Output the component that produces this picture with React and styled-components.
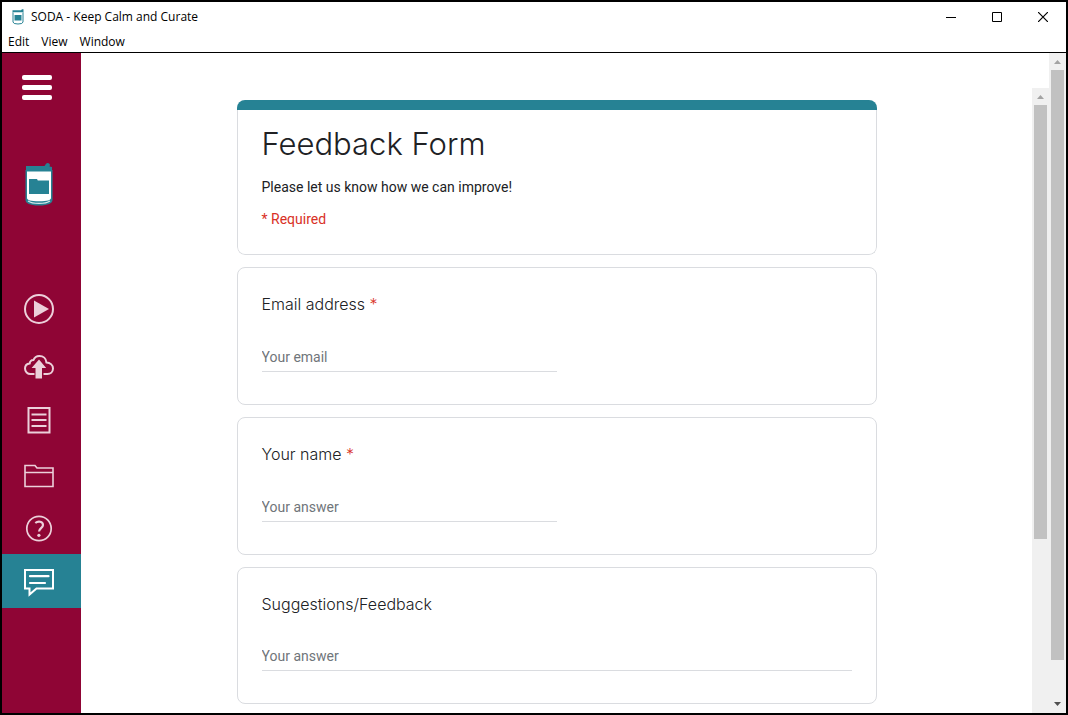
import React from "react";
import styled, { createGlobalStyle } from "styled-components";

const TEAL = "#268294";
const MAROON = "#8f0535";

const GlobalStyle = createGlobalStyle`
  *, *::before, *::after { box-sizing: border-box; }
  body {
    margin: 0;
    background: #fff;
    font-family: Roboto, "Liberation Sans", sans-serif;
    font-size: 14px;
    line-height: 20px;
    color: #202124;
  }
`;

const AppWindow = styled.div`
  display: flex;
  flex-direction: column;
  height: 100vh;
  border: 2px solid #000;
  background: #fff;
  overflow: hidden;
`;

const Header = styled.header`
  flex: none;
  border-bottom: 1px solid #000;
  font-family: "Open Sans", "Noto Sans", sans-serif;
  font-size: 12px;
  color: #000;
`;

const TitleBar = styled.div`
  display: flex;
  align-items: center;
  height: 30px;
  padding-left: 9px;
`;

const WindowTitle = styled.span`
  flex: 1;
  margin-left: 6px;
  font-size: 12px;
`;

const WindowButton = styled.button`
  display: flex;
  align-items: center;
  justify-content: center;
  width: 46px;
  height: 30px;
  padding: 0;
  border: 0;
  background: none;
  color: #000;
`;

const MenuBar = styled.nav`
  display: flex;
  gap: 12px;
  height: 20px;
  padding-left: 6px;
`;

const MenuButton = styled.button`
  padding: 0;
  border: 0;
  background: none;
  font: inherit;
  color: inherit;
`;

const Body = styled.div`
  display: flex;
  flex: 1;
  min-height: 0;
`;

const Sidebar = styled.aside`
  display: flex;
  flex-direction: column;
  flex: none;
  width: 79px;
  padding-top: 22px;
  background: ${MAROON};
`;

const Burger = styled.button`
  display: flex;
  flex-direction: column;
  gap: 5px;
  width: 30px;
  margin-left: 20px;
  padding: 0;
  border: 0;
  background: none;
`;

const BurgerBar = styled.span`
  width: 100%;
  height: 5px;
  border-radius: 2px;
  background: #fff;
`;

const Brand = styled.div`
  display: flex;
  justify-content: center;
  margin: 63px 0 78px;
  padding-right: 5px;
`;

const NavItem = styled.button`
  display: flex;
  align-items: center;
  justify-content: center;
  width: 100%;
  height: 54px;
  padding: 0 5px 0 0;
  border: 0;
  background: ${(p) => (p.$active ? TEAL : "transparent")};
  color: ${(p) => (p.$active ? "#fff" : "#ecd0da")};
`;

const Content = styled.main`
  display: flex;
  flex: 1;
  min-width: 0;
  padding-top: 35px;
`;

const FormPane = styled.div`
  flex: 1;
  min-width: 0;
  overflow: hidden;
`;

const Form = styled.form`
  display: flex;
  flex-direction: column;
  gap: 12px;
  max-width: 640px;
  margin: 0 auto;
  padding: 12px 0;
`;

const Card = styled.section`
  padding: 24px;
  border: 1px solid #dadce0;
  border-radius: 8px;
  background: #fff;
`;

const Intro = styled.div`
  border-radius: 8px;
  overflow: hidden;
`;

const AccentBar = styled.div`
  height: 10px;
  background: ${TEAL};
`;

const IntroCard = styled(Card)`
  padding: 12px 24px 25px;
  border-top: 0;
  border-radius: 0 0 8px 8px;
`;

const FormTitle = styled.h1`
  margin: 0;
  font-family: "Google Sans", Inter, sans-serif;
  font-size: 31px;
  font-weight: 300;
  line-height: 43px;
`;

const Note = styled.p`
  margin: 12px 0 0;
  color: ${(p) => (p.$required ? "#d93025" : "#202124")};
`;

const Question = styled.label`
  display: block;
  margin-bottom: 28px;
  font-family: "Google Sans", Inter, sans-serif;
  font-size: 16px;
  font-weight: 300;
  line-height: 24px;
`;

const Star = styled.span`
  color: #d93025;
`;

const Answer = styled.input`
  display: block;
  width: ${(p) => (p.$wide ? "100%" : "50%")};
  height: ${(p) => (p.$wide ? "27px" : "28px")};
  margin-bottom: 8px;
  padding: ${(p) => (p.$wide ? "0 0 2px" : "1px 0 2px")};
  border: 0;
  border-bottom: 1px solid #dadce0;
  outline: 0;
  resize: none;
  overflow: hidden;
  background: none;
  font: inherit;
  line-height: 24px;
  &::placeholder { color: #70757a; opacity: 1; }
`;

const Track = styled.div`
  display: flex;
  flex-direction: column;
  flex: none;
  width: 17px;
  background: #f0f0f0;
`;

const TrackArrow = styled.svg`
  flex: none;
  width: 17px;
  height: 17px;
`;

const Thumb = styled.div`
  flex: ${(p) => p.$share};
  margin: 0 2px;
  background: #c1c1c1;
`;

const TrackRest = styled.div`
  flex: ${(p) => p.$share};
`;

function Jar({ width, height }) {
  return (
    <svg width={width} height={height} viewBox="0 0 28 43" aria-hidden="true">
      <path d="M1 3h18.500l1.500-2h3.500v2.500l2.500.5v4H1z" fill={TEAL} />
      <circle cx="22.700" cy="2" r="2" fill={TEAL} />
      <path d="M.5 7h27v30c0 3-4 5.500-13.500 5.500S.5 40 .5 37z" fill={TEAL} />
      <path d="M2 8.500h24V35c0 2-3.500 3.300-12 3.300S2 37 2 35z" fill="#fff" />
      <path d="M3 38c4.500 3.200 17.500 3.200 22 0" fill="none" stroke="#d5e8ec" strokeWidth="1.200" />
      <path d="M4 16h8l.8 1.500H24V31H4z" fill={TEAL} />
    </svg>
  );
}

function SmallJar() {
  return (
    <svg width="14" height="16" viewBox="0 0 14 16" aria-hidden="true">
      <path d="M1.500 1.200h8.500l1-1h1.500v3.300H1.500z" fill={TEAL} />
      <path d="M2 3.500v9.500q0 2 5 2t5-2V3.500" fill="#fff" stroke={TEAL} />
      <path d="M3.500 6h7v5.500h-7z" fill={TEAL} />
    </svg>
  );
}

const stroke = { fill: "none", stroke: "currentColor", strokeWidth: 2 };

const drawings = {
  Play: (
    <>
      <circle cx="18" cy="16" r="14" {...stroke} />
      <path d="M13 7.500v17L28 16z" fill="currentColor" />
    </>
  ),
  Upload: (
    <>
      <path d="M13.500 27H9.500C6.500 27 4 24.600 4 21.600c0-2.800 2-4.900 4.700-5.200 0-2 1.700-3.500 3.700-3.300 1-2.500 3.300-4.100 6-4.100 3.800 0 6.700 2.700 7 6.400C29 15.600 32 18 32 21.500c0 3.200-2.500 5.500-5.600 5.500H22.500" {...stroke} />
      <path d="M18 12.500l7.200 8.500H21v10.500h-6.500V21h-3.900z" fill="currentColor" />
    </>
  ),
  Document: (
    <path d="M7.500 7H28.500v24.500H7.500zM10.500 13.500h15M10.500 19h15M10.500 25h15" {...stroke} />
  ),
  Folder: (
    <path d="M4 31.500V10.500h10l2 2.500h16v18.500zM4 17.500h28" {...stroke} strokeWidth="1.600" />
  ),
  Help: (
    <>
      <circle cx="18" cy="19.500" r="12.200" {...stroke} strokeWidth="1.700" />
      <path d="M14.300 14c2.800-2.300 7.700-1.600 7.700 1.900 0 3.100-4 3.300-4 6.700" {...stroke} strokeWidth="2.200" />
      <circle cx="17.900" cy="26.300" r="1.600" fill="currentColor" />
    </>
  ),
  Feedback: (
    <>
      <path d="M4 7h28v18.500H15.500L8.500 31.500V25.500H4z" {...stroke} />
      <path d="M9 13.200h18.500M9 20h15" {...stroke} strokeWidth="2.200" strokeLinecap="round" />
    </>
  ),
};

const questions = [
  { id: "email", label: "Email address", required: true, type: "email", placeholder: "Your email" },
  { id: "name", label: "Your name", required: true, type: "text", placeholder: "Your answer" },
  { id: "feedback", label: "Suggestions/Feedback", multiline: true, placeholder: "Your answer" },
];

function Arrow({ down }) {
  return (
    <TrackArrow viewBox="0 0 17 17" aria-hidden="true">
      <path d={down ? "M5 6h7L8.500 10z" : "M5 11h7L8.500 7z"} fill={down ? "#505050" : "#a3a3a3"} />
    </TrackArrow>
  );
}

export default function App() {
  return (
    <>
      <GlobalStyle />
      <AppWindow>
        <Header>
          <TitleBar>
            <SmallJar />
            <WindowTitle>SODA - Keep Calm and Curate</WindowTitle>
            <WindowButton aria-label="Minimize">
              <svg width="10" height="11" shapeRendering="crispEdges"><path d="M0 5h10v1H0z" /></svg>
            </WindowButton>
            <WindowButton aria-label="Maximize">
              <svg width="10" height="10"><path d="M.5.5h9v9h-9z" fill="none" stroke="#000" /></svg>
            </WindowButton>
            <WindowButton aria-label="Close">
              <svg width="10" height="10"><path d="M0 0l10 10M10 0L0 10" fill="none" stroke="#000" strokeWidth="1.200" /></svg>
            </WindowButton>
          </TitleBar>
          <MenuBar>
            {["Edit", "View", "Window"].map((name) => (
              <MenuButton key={name}>{name}</MenuButton>
            ))}
          </MenuBar>
        </Header>
        <Body>
          <Sidebar>
            <Burger aria-label="Toggle menu">
              <BurgerBar />
              <BurgerBar />
              <BurgerBar />
            </Burger>
            <Brand>
              <Jar width={28} height={43} />
            </Brand>
            <nav>
              {Object.entries(drawings).map(([name, drawing]) => (
                <NavItem key={name} aria-label={name} $active={name === "Feedback"}>
                  <svg width="36" height="36" viewBox="0 0 36 36" aria-hidden="true">{drawing}</svg>
                </NavItem>
              ))}
            </nav>
          </Sidebar>
          <Content>
            <FormPane>
              <Form>
                <Intro>
                  <AccentBar />
                  <IntroCard>
                    <FormTitle>Feedback Form</FormTitle>
                    <Note>Please let us know how we can improve!</Note>
                    <Note $required>* Required</Note>
                  </IntroCard>
                </Intro>
                {questions.map((q) => (
                  <Card key={q.id}>
                    <Question htmlFor={q.id}>
                      {q.label}
                      {q.required && <Star> *</Star>}
                    </Question>
                    <Answer
                      id={q.id}
                      as={q.multiline ? "textarea" : "input"}
                      type={q.type}
                      rows={q.multiline ? 1 : undefined}
                      $wide={q.multiline}
                      placeholder={q.placeholder}
                    />
                  </Card>
                ))}
              </Form>
            </FormPane>
            <Track>
              <Arrow />
              <Thumb $share={434} />
              <TrackRest $share={174} />
            </Track>
          </Content>
          <Track>
            <Arrow />
            <Thumb $share={590} />
            <TrackRest $share={36} />
            <Arrow down />
          </Track>
        </Body>
      </AppWindow>
    </>
  );
}
